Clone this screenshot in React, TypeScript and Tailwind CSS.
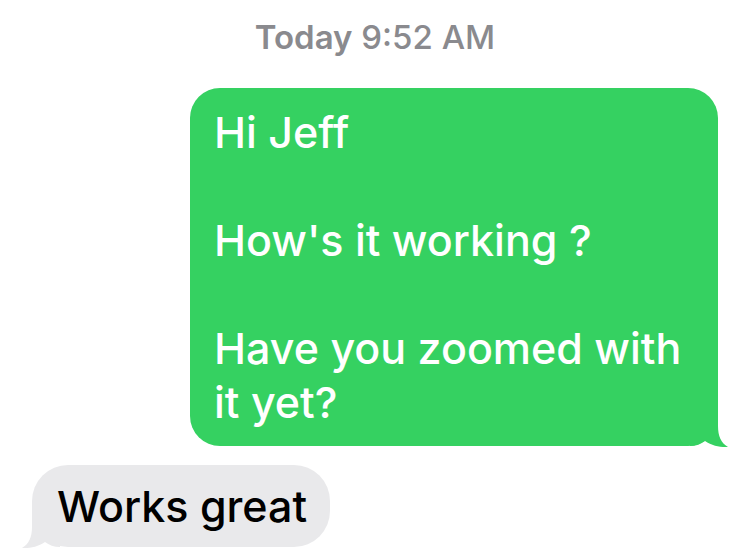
import React from 'react';

const font = { fontFamily: 'Inter, "Liberation Sans", Arial, sans-serif' };

// little curled tail under the bubble corner
const Tail = ({ side, color }: { side: 'left' | 'right'; color: string }) => {
  const d =
    side === 'right'
      ? 'M0 0 H28 V16 C28 26 31 33 38 37 C31 37.5 22 36 15 31 C11 34 6 36 0 36 Z'
      : 'M40 0 H12 V16 C12 26 9 33 2 37 C9 37.5 18 36 25 31 C29 34 34 36 40 36 Z';
  return (
    <svg
      width="40"
      height="38"
      viewBox="0 0 40 38"
      className={
        side === 'right'
          ? 'absolute right-[-12px] bottom-[-2px]'
          : 'absolute left-[-12px] bottom-[-2px]'
      }
    >
      <path d={d} fill={color} />
    </svg>
  );
};

export default function App() {
  return (
    <div className="w-[750px] h-[554px] bg-white overflow-hidden flex flex-col" style={font}>
      {/* Timestamp */}
      <div className="mt-[17px] h-[40px] leading-[40px] text-center text-[33px] font-medium text-[#8a8a8e]">
        <span className="font-semibold">Today</span> 9:52 AM
      </div>

      {/* Sent message */}
      <div className="mt-[31px] flex justify-end pr-[32px]">
        <div className="relative w-[528px] rounded-[30px] bg-[#35d161] pl-[24px] pr-[20px] pt-[17px] pb-[17px] text-white text-[43px] font-medium leading-[54px]">
          <p>Hi Jeff</p>
          <p className="mt-[54px]">How's it working ?</p>
          <p className="mt-[54px]">Have you zoomed with it yet?</p>
          <Tail side="right" color="#35d161" />
        </div>
      </div>

      {/* Received message */}
      <div className="mt-[19px] flex justify-start pl-[32px]">
        <div className="relative w-[298px] rounded-[36px] bg-[#e9e9eb] pl-[25px] pt-[14px] pb-[14px] text-black text-[43px] font-medium leading-[54px] whitespace-nowrap">
          <p>Works great</p>
          <Tail side="left" color="#e9e9eb" />
        </div>
      </div>
    </div>
  );
}
